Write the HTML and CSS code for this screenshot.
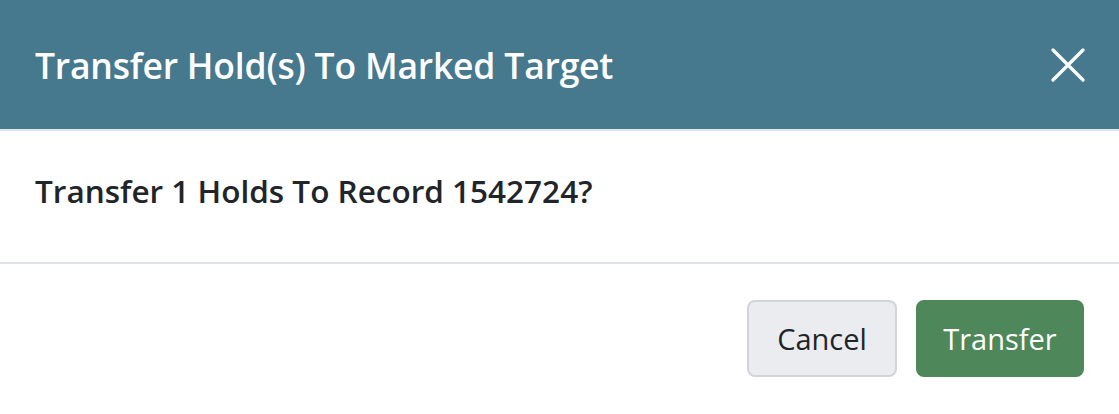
FILE: index.html
```html
<!DOCTYPE html>
<html>
<head>
<meta charset="utf-8">
<link rel="stylesheet" href="styles.css">
</head>
<body>
<div class="modal">
  <div class="modal-header">
    <h5 class="modal-title">Transfer Hold(s) To Marked Target</h5>
    <button class="close" aria-label="Close">
      <svg width="34" height="34" viewBox="0 0 34 34"><path d="M2 2 L32 32 M32 2 L2 32" stroke="#fff" stroke-width="3.2" stroke-linecap="round"/></svg>
    </button>
  </div>
  <div class="modal-body">
    <p class="question">Transfer 1 Holds To Record 1542724?</p>
  </div>
  <div class="modal-footer">
    <button class="btn btn-cancel">Cancel</button>
    <button class="btn btn-transfer">Transfer</button>
  </div>
</div>
</body>
</html>
```
FILE: styles.css
```css
html, body {
  margin: 0;
  padding: 0;
  background: #fff;
}
body {
  font-family: "Open Sans", "Noto Sans", sans-serif;
  color: #212529;
}
.modal {
  width: 1119px;
  height: 414px;
  display: flex;
  flex-direction: column;
}
.modal-header {
  height: 131px;
  flex: none;
  box-sizing: border-box;
  background: #46798e;
  border-bottom: 2px solid #dfe6ea;
  display: flex;
  align-items: center;
  justify-content: space-between;
  padding: 0 34px 0 35px;
}
.modal-title {
  margin: 0;
  color: #fff;
  font-size: 35.5px;
  font-weight: 600;
  letter-spacing: -0.2px;
}
.close {
  background: none;
  border: 0;
  padding: 0;
  width: 34px;
  height: 34px;
  display: flex;
  cursor: pointer;
}
.modal-body {
  height: 133px;
  flex: none;
  box-sizing: border-box;
  border-bottom: 2px solid #dee2e6;
  padding: 0 35px;
  display: flex;
  align-items: center;
}
.question {
  margin: 0 0 12px;
  font-size: 31.5px;
  font-weight: 600;
  color: #212529;
}
.modal-footer {
  display: flex;
  justify-content: flex-end;
  gap: 19px;
  padding: 36px 35px 0 0;
}
.btn {
  font-family: inherit;
  font-size: 29px;
  height: 77px;
  border-radius: 8px;
  cursor: pointer;
  padding: 0;
}
.btn-cancel {
  width: 150px;
  background: #ebecf0;
  border: 2px solid #d2d4d8;
  color: #212529;
}
.btn-transfer {
  width: 168px;
  background: #4d875a;
  border: 2px solid #4d875a;
  color: #fff;
}
```
